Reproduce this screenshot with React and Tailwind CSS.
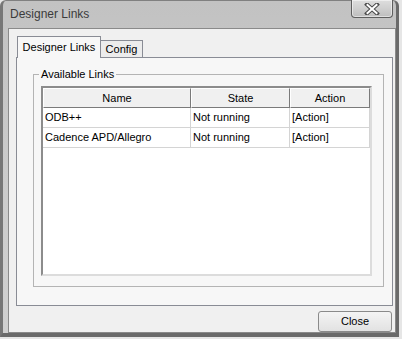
export default function App() {
  const rows = [
    { name: "ODB++", state: "Not running", action: "[Action]" },
    { name: "Cadence APD/Allegro", state: "Not running", action: "[Action]" },
  ];
  return (
    <div className="w-[402px] h-[339px] overflow-hidden bg-[#e6e6e6] [font-family:'Liberation_Sans',Arial,sans-serif] text-black">
      <div className="h-[337px] mr-[3px] flex flex-col rounded-tl-[6px] rounded-tr-[6px] border-l-[3px] border-l-[#777] border-t border-t-[#808080] border-r-[3px] border-r-[#6a6a6a] border-b-[4px] border-b-[#6a6a6a] bg-gradient-to-b from-[#c2c2c2] via-[#cbcbcb] to-[#d0d0d0]">
        {/* title bar */}
        <div className="h-[27px] flex items-start justify-between">
          <div className="pl-[7px] pt-[6px] text-[12px] leading-[14px] text-[#3b3b3b]">Designer Links</div>
          <div className="mr-[3px] -mt-px w-[42px] h-[18px] rounded-b-[4px] border border-t-0 border-[#5e5e5e] bg-gradient-to-b from-[#dedede] via-[#cfcfcf] to-[#bdbdbd] flex items-center justify-center shadow-[inset_0_0_0_1px_rgba(255,255,255,0.5)]">
            <svg width="16" height="12" viewBox="0 0 16 12">
              <path d="M3 1.5 L13 10.5 M13 1.5 L3 10.5" stroke="#4a4a4a" strokeWidth="4" strokeLinecap="square" />
              <path d="M3.5 2 L12.5 10 M12.5 2 L3.5 10" stroke="#ffffff" strokeWidth="2" strokeLinecap="square" />
            </svg>
          </div>
        </div>
        {/* client */}
        <div className="ml-[5px] flex-1 flex flex-col border border-[#8a8a8a] bg-[#f0f0f0]">
          {/* tabs */}
          <div className="relative z-10 flex items-end pl-[8px] pt-[7px] -mb-px">
            <div className="h-[22px] w-[84px] border border-b-0 border-[#898c95] bg-[#f7f7f7] flex items-start justify-center pt-[4px] text-[11px] leading-[13px]">
              Designer Links
            </div>
            <div className="h-[18px] w-[42px] border border-l-0 border-[#898c95] bg-[#ececec] flex items-start justify-center pt-[2px] text-[11px] leading-[13px]">
              Config
            </div>
          </div>
          {/* panel */}
          <div className="ml-[7px] mr-[2px] h-[249px] flex flex-col border border-[#898c95] bg-[#f7f7f7]">
            <fieldset className="ml-[16px] mr-[8px] mt-[9px] mb-[18px] flex-1 border border-[#b4b4b4] min-h-0">
              <legend className="ml-[5px] px-[2px] text-[11px] leading-[14px]">Available Links</legend>
              <div className="ml-[7px] mr-[11px] mt-[5px] h-[190px] border-2 border-t-[#8c8c8c] border-l-[#8c8c8c] border-r-[#dcdcdc] border-b-[#dcdcdc] bg-white text-[11px] leading-[13px]">
                <div className="grid grid-cols-[148px_99px_80px]">
                  {["Name", "State", "Action"].map((h) => (
                    <div key={h} className="h-[20px] flex items-center justify-center bg-[#f0f0f0] border-t border-l border-t-white border-l-white border-r border-b border-r-[#7a7a7a] border-b-[#7a7a7a]">
                      {h}
                    </div>
                  ))}
                  {rows.map((r) => [
                    <div key={r.name + "n"} className="h-[20px] flex items-center pl-[2px] border-r border-b border-[#d4d4d4]">{r.name}</div>,
                    <div key={r.name + "s"} className="h-[20px] flex items-center pl-[2px] border-r border-b border-[#d4d4d4]">{r.state}</div>,
                    <div key={r.name + "a"} className="h-[20px] flex items-center pl-[2px] border-r border-b border-[#d4d4d4]">{r.action}</div>,
                  ])}
                </div>
              </div>
            </fieldset>
          </div>
          {/* bottom button */}
          <div className="flex justify-end mr-[3px] mt-[5px]">
            <button className="w-[74px] h-[21px] rounded-[3px] border border-[#8a8a8a] bg-gradient-to-b from-[#f4f4f4] to-[#e2e2e2] text-[11px] leading-[13px] flex items-center justify-center">
              Close
            </button>
          </div>
        </div>
      </div>
    </div>
  );
}
